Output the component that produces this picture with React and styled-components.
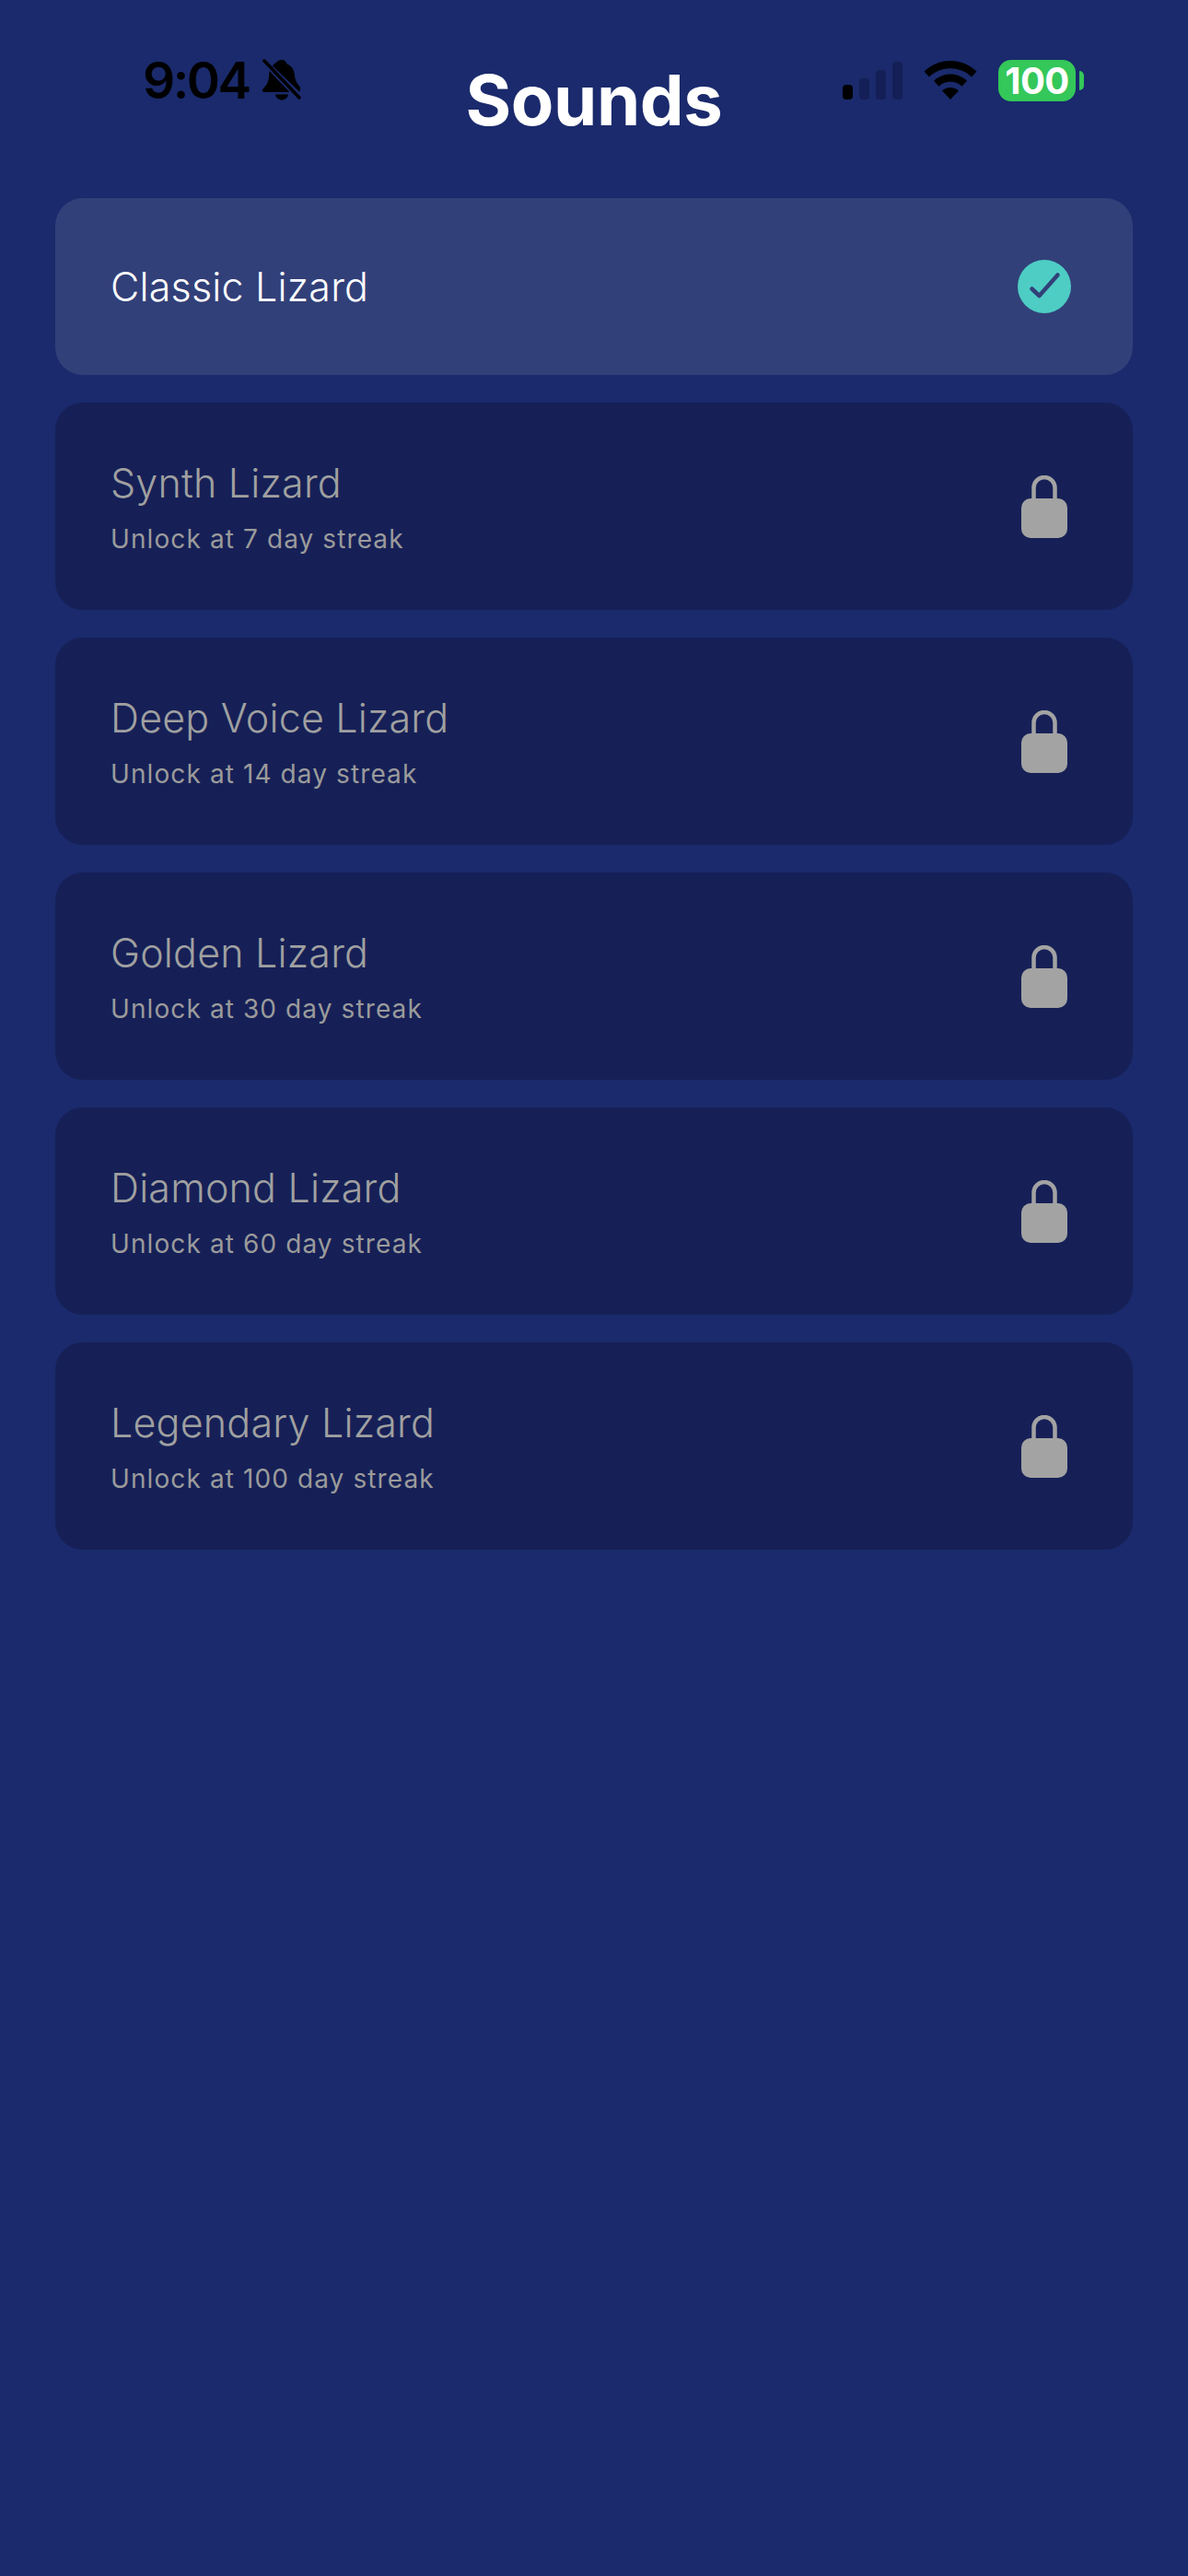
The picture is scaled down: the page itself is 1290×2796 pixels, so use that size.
import React from "react";
import styled, { createGlobalStyle } from "styled-components";

const GlobalStyle = createGlobalStyle`
  html, body {
    margin: 0;
    padding: 0;
    background: #1a2a6c;
  }
  * { box-sizing: border-box; }
`;

const Screen = styled.main`
  width: 1290px;
  min-height: 2796px;
  background: #1a2a6c;
  font-family: Inter, "Liberation Sans", sans-serif;
`;

const Header = styled.header`
  height: 215px;
  display: grid;
  grid-template-columns: 1fr auto 1fr;
  padding-top: 64px;
  align-items: start;
`;

const Clock = styled.div`
  display: flex;
  align-items: center;
  gap: 13px;
  height: 46px;
  padding-left: 155px;
  color: #000;
`;

const Time = styled.span`
  font-size: 55px;
  font-weight: 600;
  line-height: 46px;
  letter-spacing: -2.5px;
`;

const Title = styled.h1`
  margin: 0;
  color: #fff;
  font-size: 76px;
  font-weight: 700;
  line-height: 88px;
  letter-spacing: -0.4px;
`;

const Status = styled.div`
  display: flex;
  align-items: center;
  justify-content: flex-end;
  gap: 23px;
  height: 46px;
  padding-right: 113px;
`;

const Bars = styled.div`
  display: flex;
  align-items: flex-end;
  gap: 7px;
  height: 41px;
`;

const Bar = styled.span`
  width: 11px;
  height: ${(p) => p.$h}px;
  border-radius: 4px;
  background: ${(p) => (p.$on ? "#000" : "#141f57")};
`;

const Battery = styled.div`
  display: flex;
  align-items: center;
  gap: 4px;
`;

const BatteryBody = styled.div`
  width: 84px;
  height: 45px;
  border-radius: 14px;
  background: #34c759;
  color: #fff;
  font-size: 40px;
  font-weight: 700;
  line-height: 45px;
  text-align: center;
  letter-spacing: -0.5px;
`;

const BatteryCap = styled.span`
  width: 5px;
  height: 21px;
  border-radius: 0 5px 5px 0;
  background: #34c759;
`;

const List = styled.ul`
  list-style: none;
  margin: 0;
  padding: 0 60px;
  display: flex;
  flex-direction: column;
  gap: 30px;
`;

const Card = styled.li`
  height: ${(p) => (p.$selected ? 192 : 225)}px;
  border-radius: 30px;
  background: ${(p) => (p.$selected ? "#324079" : "#162057")};
  display: flex;
  align-items: center;
  justify-content: space-between;
  padding: 0 66px 0 60px;
`;

const Text = styled.div`
  display: flex;
  flex-direction: column;
  gap: 18px;
`;

const Name = styled.div`
  font-size: 43px;
  line-height: 52px;
  font-weight: 350;
  letter-spacing: 0.2px;
  color: ${(p) => (p.$selected ? "#fff" : "#a0a0a0")};
`;

const Hint = styled.div`
  font-size: 28px;
  line-height: 34px;
  font-weight: 400;
  letter-spacing: 1.1px;
  color: #9b9b9b;
`;

const IconSlot = styled.div`
  width: 60px;
  display: flex;
  justify-content: center;
  align-items: center;
`;

const sounds = [
  { name: "Synth Lizard", streak: 7 },
  { name: "Deep Voice Lizard", streak: 14 },
  { name: "Golden Lizard", streak: 30 },
  { name: "Diamond Lizard", streak: 60 },
  { name: "Legendary Lizard", streak: 100 },
];

const MutedBell = () => (
  <svg width="44" height="46" viewBox="0 0 44 46" aria-hidden="true">
    <path d="M12 7.500C14 4.500 16.500 3.300 17.500 2.500 18 1.500 20 1 22 1c3 0 5 2 5.500 4.500C33 7.500 35.500 12 36 18c.4 5 2 8 5.500 12 1 1.500 1 3.500-.5 5.500z" fill="#000" />
    <path d="M8.600 13 30.400 36H3c-2 0-2.600-2.400-1.200-3.800C5 29 7.500 26 8 19c.1-2.200.3-4.200.6-6z" fill="#000" />
    <path d="M15 38.500h14c-.6 3.500-3.500 6-7 6s-6.400-2.500-7-6z" fill="#000" />
    <path d="M3 2 41 42" stroke="#000" strokeWidth="3.500" strokeLinecap="round" fill="none" />
  </svg>
);

const Wifi = () => (
  <svg width="58" height="42" viewBox="0 0 58 42" aria-hidden="true">
    <path d="M29 0c11 0 21 4.300 28.500 11.500L52 17.500C46 11.800 38 8.300 29 8.300S12 11.800 6 17.500L.5 11.500C8 4.300 18 0 29 0z" fill="#000" />
    <path d="M29 14.500c7 0 13.300 2.700 18 7.200l-5.500 6C38.200 24.600 33.800 22.800 29 22.800s-9.200 1.800-12.500 4.900l-5.500-6c4.700-4.500 11-7.200 18-7.200z" fill="#000" />
    <path d="M29 29c3.500 0 6.700 1.300 9 3.600L29 42l-9-9.400c2.300-2.300 5.500-3.600 9-3.600z" fill="#000" />
  </svg>
);

const CheckBadge = () => (
  <svg width="58" height="58" viewBox="0 0 58 58" aria-hidden="true">
    <circle cx="29" cy="29" r="29" fill="#4ecdc4" />
    <path d="M15.500 31.500l8 7.500 20-22.500" fill="none" stroke="#324079" strokeWidth="4.500" strokeLinecap="round" strokeLinejoin="round" />
  </svg>
);

const Lock = () => (
  <svg width="50" height="68" viewBox="0 0 50 68" aria-hidden="true">
    <path d="M13.500 27V13.500a11.500 11.500 0 0 1 23 0V27" fill="none" stroke="#a3a3a3" strokeWidth="4.500" />
    <rect x="0" y="25" width="50" height="43" rx="10" fill="#a3a3a3" />
  </svg>
);

export default function App() {
  return (
    <Screen>
      <GlobalStyle />
      <Header>
        <Clock>
          <Time>9:04</Time>
          <MutedBell />
        </Clock>
        <Title>Sounds</Title>
        <Status>
          <Bars>
            <Bar $h={16} $on />
            <Bar $h={23} />
            <Bar $h={32} />
            <Bar $h={41} />
          </Bars>
          <Wifi />
          <Battery>
            <BatteryBody>100</BatteryBody>
            <BatteryCap />
          </Battery>
        </Status>
      </Header>
      <List>
        <Card $selected>
          <Name $selected>Classic Lizard</Name>
          <IconSlot>
            <CheckBadge />
          </IconSlot>
        </Card>
        {sounds.map((s) => (
          <Card key={s.name}>
            <Text>
              <Name>{s.name}</Name>
              <Hint>Unlock at {s.streak} day streak</Hint>
            </Text>
            <IconSlot>
              <Lock />
            </IconSlot>
          </Card>
        ))}
      </List>
    </Screen>
  );
}
